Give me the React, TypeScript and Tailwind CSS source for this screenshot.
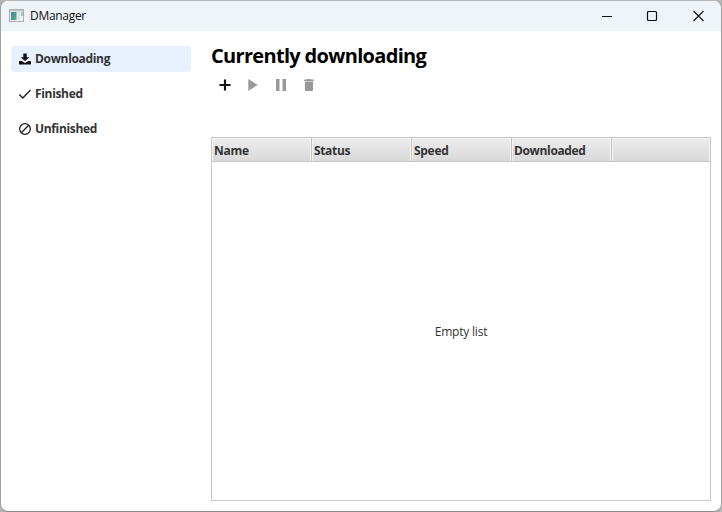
import React from "react";

const columns = [
  { label: "Name", spacing: "tracking-[-0.3px]" },
  { label: "Status", spacing: "tracking-[-0.35px]" },
  { label: "Speed", spacing: "tracking-[-0.3px]" },
  { label: "Downloaded", spacing: "tracking-[-0.35px]" },
];

function AppIcon() {
  return (
    <svg width="16" height="14" viewBox="0 0 16 14" className="shrink-0">
      <defs>
        <linearGradient id="screen" x1="0" y1="0" x2="1" y2="1">
          <stop offset="0" stopColor="#4584a4" />
          <stop offset="1" stopColor="#55b27a" />
        </linearGradient>
      </defs>
      <rect x="0.5" y="0.5" width="14" height="12" fill="#eef0f1" stroke="#a9afb3" />
      <rect x="1" y="1" width="13" height="1.5" fill="#c3c8cb" />
      <rect x="2" y="3" width="5.5" height="8" fill="url(#screen)" />
      <rect x="8.500" y="3" width="2.500" height="8" fill="#dfe2e3" />
      <rect x="12" y="3" width="2" height="4" fill="#a5c9b8" />
    </svg>
  );
}

function DownloadIcon() {
  return (
    <svg width="12" height="12" viewBox="0 0 12 12" fill="#111">
      <path d="M4.300 0.600h3.400v3.600h2.700L6 8.100 1.600 4.200h2.700z" />
      <path d="M0.600 8h2.200L6 10.100 9.200 8h2.200q.6 0 .6.600v2.400q0 .6-.6.600H.600q-.6 0-.6-.6V8.600q0-.6.6-.6z" />
    </svg>
  );
}

function CheckIcon() {
  return (
    <svg width="12" height="12" viewBox="0 0 12 12" fill="none" stroke="#222" strokeWidth="1.4">
      <path d="M0.400 6.600 3.800 10 11.600 2" />
    </svg>
  );
}

function BlockedIcon() {
  return (
    <svg width="12" height="12" viewBox="0 0 12 12" fill="none" stroke="#222" strokeWidth="1.3">
      <circle cx="6" cy="6" r="5.350" />
      <path d="M2.300 9.700 9.700 2.300" />
    </svg>
  );
}

function NavItem({ icon, label, active }: { icon: React.ReactNode; label: string; active?: boolean }) {
  return (
    <div
      className={
        active
          ? "flex h-[26px] items-center gap-1 rounded-[3px] bg-[#e8f0fe] pl-2"
          : "flex h-[26px] items-center gap-1 rounded-[3px] pl-2"
      }
    >
      {icon}
      <span className="text-[12px] leading-4 font-bold tracking-[-0.33px] whitespace-nowrap text-[#333]">{label}</span>
    </div>
  );
}

export default function App() {
  return (
    <div className="h-[512px] w-[722px] overflow-hidden bg-[#b4b4b4] font-['Open_Sans','Noto_Sans',sans-serif]">
      <div className="flex h-[512px] w-[722px] flex-col overflow-hidden rounded-lg border border-t-[#b5b5b5] border-r-[#a0a0a0] border-b-[#8c8c8c] border-l-[#a0a0a0] bg-white">
        <header className="flex h-[30px] shrink-0 items-center justify-between bg-[#eff4f9] pl-2">
          <div className="flex items-center gap-[5px]">
            <AppIcon />
            <span className="text-[12px] leading-4 tracking-[-0.3px] text-[#111]">DManager</span>
          </div>
          <svg width="104" height="12" viewBox="0 0 104 12" className="mr-4" fill="none" stroke="#111" strokeWidth="1.2">
            <path d="M1 6.500h10" strokeWidth="1" />
            <rect x="46.500" y="1.500" width="9" height="9" rx="1" />
            <path d="M92.500 1l10 10M102.500 1l-10 10" strokeWidth="1.100" />
          </svg>
        </header>
        <div className="flex flex-1">
          <nav className="flex w-[200px] flex-col gap-[9px] px-2.5 pt-[15px]">
            <NavItem icon={<DownloadIcon />} label="Downloading" active />
            <NavItem icon={<CheckIcon />} label="Finished" />
            <NavItem icon={<BlockedIcon />} label="Unfinished" />
          </nav>
          <main className="flex flex-1 flex-col pt-[11px] pr-2.5 pb-2.5 pl-2.5">
            <h1 className="h-[27px] text-[20px] leading-[27px] font-bold tracking-[-0.68px] whitespace-nowrap text-black">
              Currently downloading
            </h1>
            <div className="mt-[10px] flex h-3 items-center gap-4 pl-2">
              <svg width="12" height="12" viewBox="0 0 12 12" fill="none" stroke="#111" strokeWidth="2.2" strokeLinecap="round">
                <path d="M6 1.300v9.400M1.300 6h9.400" />
              </svg>
              <svg width="12" height="12" viewBox="0 0 12 12" fill="#999">
                <path d="M1.300 0 10.700 6 1.300 12z" />
              </svg>
              <svg width="12" height="12" viewBox="0 0 12 12" fill="#999">
                <path d="M1 0h3.500v12H1zM7.500 0H11v12H7.500z" />
              </svg>
              <svg width="12" height="12" viewBox="0 0 12 12" fill="#999">
                <path d="M1.300.600H4L4.500 0h3L8 .600h2.700v1.600H1.300zM1.900 2.800h8.200v7.900q0 1.300-1.300 1.300H3.200Q1.900 12 1.900 10.700z" />
              </svg>
            </div>
            <section className="mt-[46px] flex flex-1 flex-col border border-[#c8c8c8]">
              <div className="flex h-6 border-b border-[#c4c4c4]">
                {columns.map((c) => (
                  <div key={c.label} className="w-[100px] border-r border-[#c4c4c4]">
                    <div className="flex h-full items-center border-t border-r border-l border-[#f3f3f3] bg-linear-to-b from-[#ececec] to-[#d9d9d9] pt-0.5 pl-px">
                      <span className={`text-[12px] leading-4 font-bold text-[#333] ${c.spacing}`}>{c.label}</span>
                    </div>
                  </div>
                ))}
                <div className="flex-1 border-t border-r border-l border-[#f3f3f3] bg-linear-to-b from-[#ececec] to-[#d9d9d9]" />
              </div>
              <div className="flex flex-1 items-center justify-center pt-0.5 text-[12px] leading-4 tracking-[-0.2px] text-[#333]">
                Empty list
              </div>
            </section>
          </main>
        </div>
      </div>
    </div>
  );
}
